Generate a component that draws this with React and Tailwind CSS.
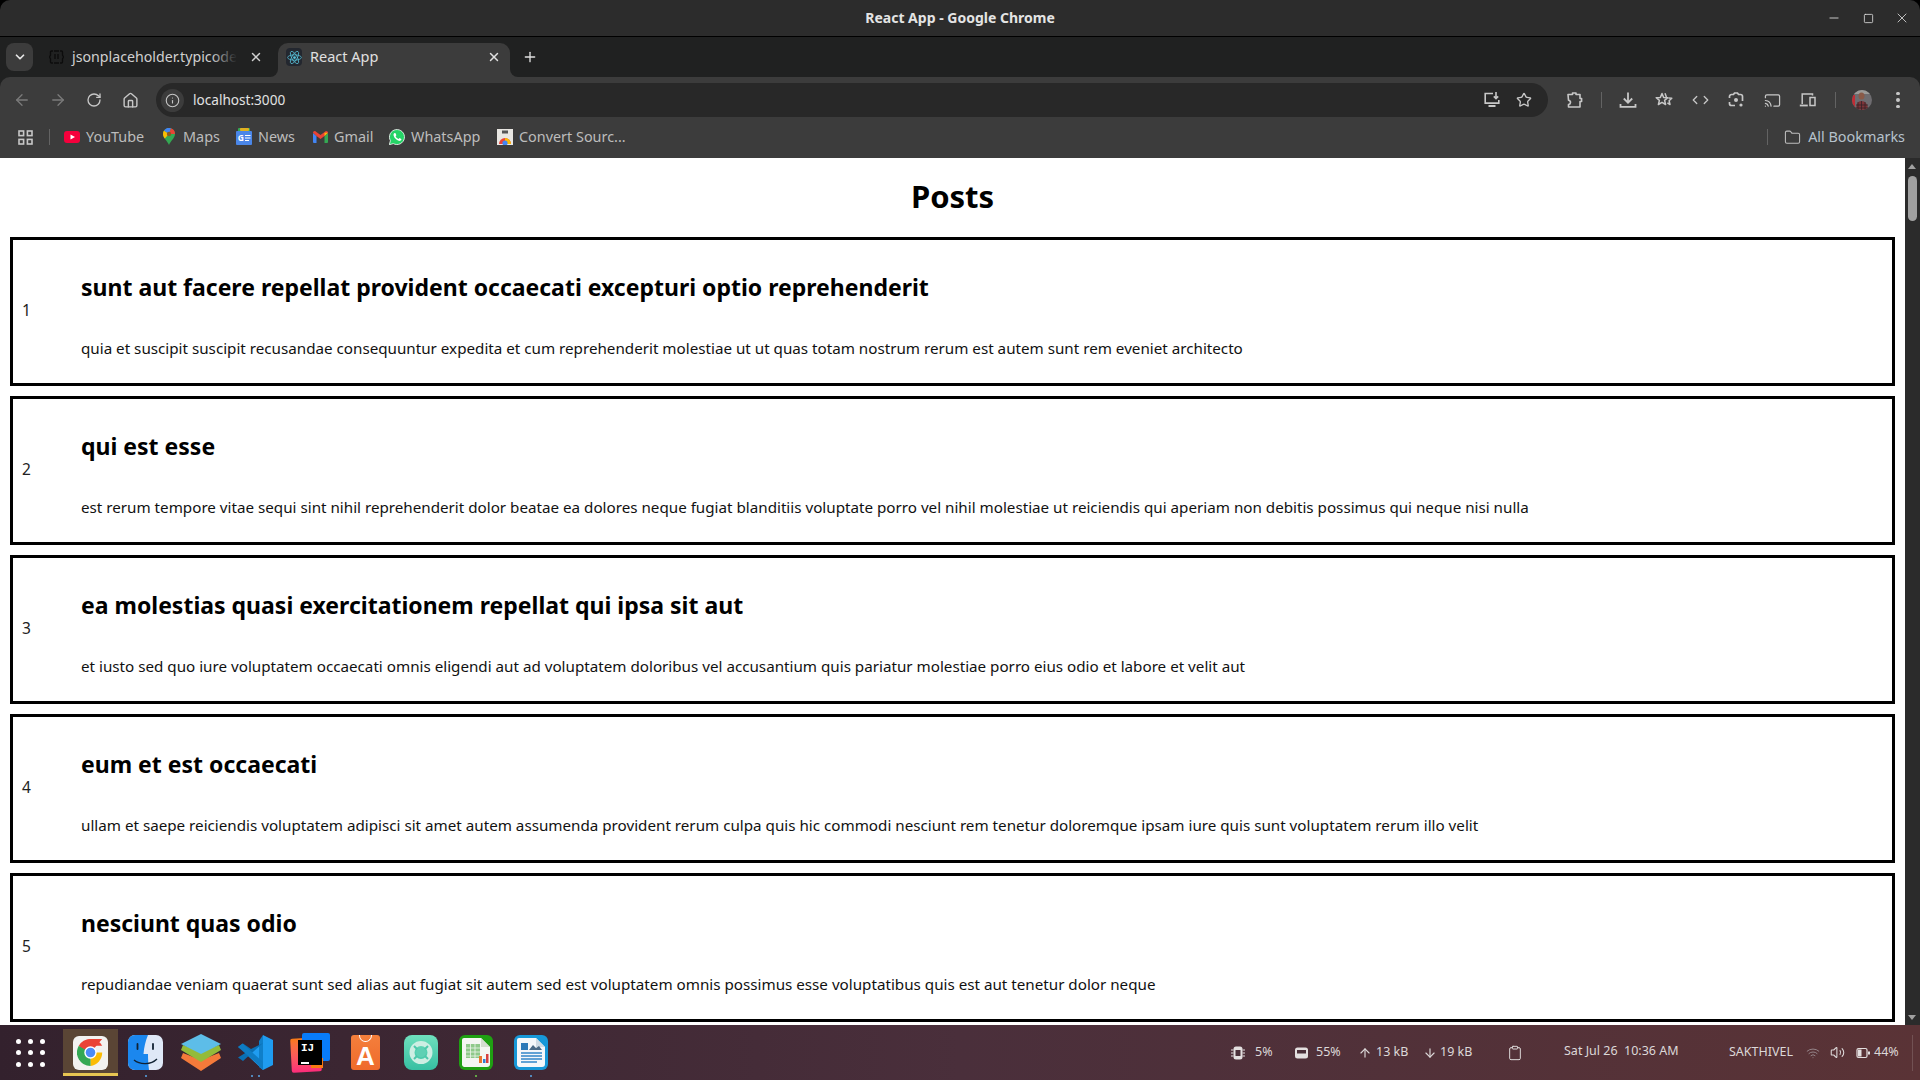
import { Info, ArrowLeft, ArrowRight, RotateCw, Home, Star, Cast, Folder, X, Plus, ChevronDown, ChevronLeft, ChevronRight, Minus, Square, Wifi, Volume2, ArrowUp, ArrowDown, Clipboard } from 'lucide-react'

const POSTS = [
  { id: 1, title: 'sunt aut facere repellat provident occaecati excepturi optio reprehenderit', body: 'quia et suscipit suscipit recusandae consequuntur expedita et cum reprehenderit molestiae ut ut quas totam nostrum rerum est autem sunt rem eveniet architecto' },
  { id: 2, title: 'qui est esse', body: 'est rerum tempore vitae sequi sint nihil reprehenderit dolor beatae ea dolores neque fugiat blanditiis voluptate porro vel nihil molestiae ut reiciendis qui aperiam non debitis possimus qui neque nisi nulla' },
  { id: 3, title: 'ea molestias quasi exercitationem repellat qui ipsa sit aut', body: 'et iusto sed quo iure voluptatem occaecati omnis eligendi aut ad voluptatem doloribus vel accusantium quis pariatur molestiae porro eius odio et labore et velit aut' },
  { id: 4, title: 'eum et est occaecati', body: 'ullam et saepe reiciendis voluptatem adipisci sit amet autem assumenda provident rerum culpa quis hic commodi nesciunt rem tenetur doloremque ipsam iure quis sunt voluptatem rerum illo velit' },
  { id: 5, title: 'nesciunt quas odio', body: 'repudiandae veniam quaerat sunt sed alias aut fugiat sit autem sed est voluptatem omnis possimus esse voluptatibus quis est aut tenetur dolor neque' },
]

function Post({ post }) {
  return (
    <div className="flex items-center h-[149px] mb-[10px] border-[3px] border-black pl-[9px] shrink-0">
      <div className="w-[59px] text-[15.5px] -mt-[1px] text-[#222]">{post.id}</div>
      <div className="pt-[6px]">
        <div className="text-[23px] leading-[32px] font-bold text-black">{post.title}</div>
        <div className="mt-[34px] text-[15.2px] leading-[22px] text-[#111]">{post.body}</div>
      </div>
    </div>
  )
}

// toolbar icon holder, 36px pitch
function Slot({ children }) {
  return <div className="w-[36px] h-full flex items-center justify-center shrink-0">{children}</div>
}

function Sep() {
  return <div className="w-px h-[16px] bg-[#636363] shrink-0" />
}

function Bookmark({ icon, label, gap, width }) {
  return (
    <div className={`flex items-center shrink-0 ${width}`}>
      <div className={`flex items-center justify-center shrink-0 ${gap}`}>{icon}</div>
      <span>{label}</span>
    </div>
  )
}

function InstallIcon() {
  return (
    <svg width="18" height="18" viewBox="0 0 18 18" fill="none" stroke="#c7c7c7" strokeWidth="1.6">
      <path d="M10 2.5H2.2v9.6h13.6V9" />
      <path d="M13 1v6.5M10.8 5.4 13 7.6l2.2-2.2" />
      <path d="M5.5 15h7" strokeWidth="2" />
    </svg>
  )
}

function PuzzleIcon() {
  return (
    <svg width="18" height="18" viewBox="0 0 18 18" fill="none" stroke="#c7c7c7" strokeWidth="1.6" strokeLinejoin="round">
      <path d="M2 3.5h4.5V2h3.5v1.5h4v4h1.6v3H14v5.500H2.500v-2.500c1.600-.2 2-1 2-2s-.6-2-2-2.200z" />
    </svg>
  )
}

function DownloadIcon() {
  return (
    <svg width="18" height="18" viewBox="0 0 18 18" fill="none" stroke="#c7c7c7" strokeWidth="1.8">
      <path d="M9 1.5v10M4.8 7.5 9 11.7l4.2-4.2" />
      <path d="M1.5 13v2.8h15V13" />
    </svg>
  )
}

function StarListIcon() {
  return (
    <svg width="18" height="18" viewBox="0 0 18 18" fill="none" stroke="#c7c7c7" strokeWidth="1.5" strokeLinejoin="round">
      <path d="M7 2.5 8.6 6.4l4.2.3-3.2 2.7 1 4.1L7 11.3l-3.6 2.2 1-4.1L1.2 6.7l4.2-.3z" />
      <path d="M10 2.2 11.4 6M13.4 7l3.4.3-2.7 2.4.9 3.8-2.6-1.6" />
    </svg>
  )
}

function LensIcon() {
  return (
    <svg width="18" height="18" viewBox="0 0 18 18" fill="none" stroke="#c7c7c7" strokeWidth="1.7">
      <path d="M2.500 7V5.500a2 2 0 0 1 2-2h2L7.500 2h3l1 1.500h2a2 2 0 0 1 2 2V10" />
      <path d="M2.500 11v1.500a2 2 0 0 0 2 2H8" />
      <circle cx="9" cy="9" r="2" fill="#c7c7c7" stroke="none" />
      <circle cx="14" cy="14" r="1.600" fill="#c7c7c7" stroke="none" />
    </svg>
  )
}

function DevicesIcon() {
  return (
    <svg width="18" height="18" viewBox="0 0 18 18" fill="none" stroke="#c7c7c7" strokeWidth="1.5">
      <path d="M3.2 13V3h10.3v1.5" />
      <path d="M.8 14.5h8" strokeWidth="1.8" />
      <rect x="11" y="6.5" width="5" height="8" />
    </svg>
  )
}

function Avatar() {
  return (
    <svg width="20" height="20" viewBox="0 0 20 20">
      <clipPath id="avatar-clip"><circle cx="10" cy="10" r="10" /></clipPath>
      <g clipPath="url(#avatar-clip)">
        <rect width="20" height="20" fill="#6e6c70" />
        <rect width="20" height="4" fill="#9b9a98" />
        <rect width="3" height="20" y="5" fill="#c22c34" />
        <ellipse cx="9.500" cy="6" rx="3" ry="3.500" fill="#8a5a48" />
        <path d="M4 20c0-6 2-9 5.500-9S16 14 16 20z" fill="#7d3438" />
        <path d="M6 12v8M9.500 11v9M13 12v8M4 15h12M4 18h12" stroke="#33242a" strokeWidth=".8" />
      </g>
    </svg>
  )
}

function GridIcon() {
  return (
    <svg width="15" height="15" viewBox="0 0 15 15" fill="none" stroke="#c7c7c7" strokeWidth="1.6">
      <rect x="1" y="1" width="4.6" height="4.6" />
      <rect x="9.4" y="1" width="4.6" height="4.6" />
      <rect x="1" y="9.4" width="4.6" height="4.6" />
      <rect x="9.4" y="9.4" width="4.6" height="4.6" />
    </svg>
  )
}

function YoutubeIcon() {
  return (
    <svg width="16" height="12" viewBox="0 0 16 12">
      <rect width="16" height="12" rx="3" fill="#f5003c" />
      <path d="M6.5 3.5 11 6l-4.5 2.5z" fill="#fff" />
    </svg>
  )
}

function MapsIcon() {
  return (
    <svg width="12" height="17" viewBox="0 0 12 17">
      <path d="M6 17C4.500 13 0 10 0 6a6 6 0 0 1 12 0c0 4-4.500 7-6 11z" fill="#34a853" />
      <path d="M1 2.600 6 6l-4.200 4.500C.6 9 0 7.500 0 6c0-1.300.4-2.500 1-3.400z" fill="#fbbc04" />
      <path d="M1 2.600A6 6 0 0 1 8 .3L6 6z" fill="#4285f4" />
      <path d="M8 .3A6 6 0 0 1 12 6H6z" fill="#ea4335" />
      <circle cx="6" cy="6" r="2.200" fill="#8a5a20" />
    </svg>
  )
}

function NewsIcon() {
  return (
    <svg width="16" height="17" viewBox="0 0 16 17">
      <rect x="2" y="0" width="12" height="4" rx="1" fill="#34a853" />
      <rect x="4" y="0" width="9" height="3" rx="1" fill="#e0b020" />
      <rect y="3" width="16" height="14" rx="1" fill="#4a86e8" />
      <text x="1.800" y="13" fontSize="8.500" fontWeight="700" fill="#fff" fontFamily="Noto Sans, sans-serif">G</text>
      <path d="M9 7.500h5.500M9 10h5.500M9 12.500h4" stroke="#fff" strokeWidth="1.100" />
    </svg>
  )
}

function GmailIcon() {
  return (
    <svg width="15" height="12" viewBox="0 0 15 12">
      <path d="M0 2v9a1 1 0 0 0 1 1h2.500V5z" fill="#4285f4" />
      <path d="M15 2v9a1 1 0 0 1-1 1h-2.500V5z" fill="#34a853" />
      <path d="M0 1.800C0 .4 1.600-.4 2.700.4L7.500 4 12.300.4C13.400-.4 15 .4 15 1.800L11.500 5 7.500 8 3.500 5z" fill="#ea4335" />
      <path d="M11.500 1.700 15 1.800 11.500 5z" fill="#fbbc04" />
    </svg>
  )
}

function WhatsappIcon() {
  return (
    <svg width="16" height="16" viewBox="0 0 16 16">
      <path d="M.3 15.700 1.400 11.700A7.500 7.500 0 1 1 4.300 14.600z" fill="#25d366" stroke="#fff" strokeWidth=".8" />
      <path d="M5.500 4c-.8.500-1.200 1.500-.8 2.800.6 2.200 2.800 4.400 5 5 1.300.3 2.300-.200 2.700-1l-.1-.8-1.800-.9-.9 1c-1.300-.5-2.400-1.500-3-2.800l.8-1-.8-2z" fill="#fff" />
    </svg>
  )
}

function ConvertIcon() {
  return (
    <svg width="16" height="16" viewBox="0 0 16 16">
      <rect width="16" height="16" fill="#e8e6e2" />
      <rect x="5" y="1.500" width="6" height="3" fill="#555" />
      <path d="M2 15a6 6 0 0 1 12 0z" fill="#ea4335" />
      <path d="M8 15V9a6 6 0 0 1 6 6z" fill="#fbbc04" />
      <circle cx="8" cy="14" r="2.600" fill="#4285f4" />
    </svg>
  )
}

function ReactFavicon() {
  return (
    <div className="w-[16px] h-[18px] rounded-sm bg-[#23272f] flex items-center justify-center shrink-0">
      <svg width="15" height="15" viewBox="-12 -12 24 24" fill="none" stroke="#58c4dc" strokeWidth="1.200">
        <circle r="2.200" fill="#58c4dc" stroke="none" />
        <ellipse rx="11" ry="4.300" />
        <ellipse rx="11" ry="4.300" transform="rotate(60)" />
        <ellipse rx="11" ry="4.300" transform="rotate(120)" />
      </svg>
    </div>
  )
}

function JsonFavicon() {
  return (
    <svg width="15" height="14" viewBox="0 0 15 14" fill="none" stroke="#0c0c0c" strokeWidth="1.300" className="shrink-0">
      <path d="M4 1H2.500a1 1 0 0 0-1 1v3l-1 2 1 2v3a1 1 0 0 0 1 1H4M11 1h1.500a1 1 0 0 1 1 1v3l1 2-1 2v3a1 1 0 0 1-1 1H11" />
      <path d="M6 4v5M9 4v5M5 1h5M5 13h5" />
    </svg>
  )
}

function ChromeLogo() {
  return (
    <svg width="27" height="27" viewBox="0 0 48 48">
      <path d="M24 24 13.600 42 3.200 24A24 24 0 0 1 24 0h20.800z" fill="#ea4335" />
      <path d="M24 24h20.800A24 24 0 0 1 24 48l-.100 0z" fill="#fbbc04" />
      <path d="M24 24 24 48A24 24 0 0 1 3.200 12z" fill="#34a853" />
      <path d="M24 0a24 24 0 0 1 20.800 12H24a12 12 0 0 0-10.400 6L3.200 12A24 24 0 0 1 24 0z" fill="#ea4335" />
      <circle cx="24" cy="24" r="11" fill="#fff" />
      <circle cx="24" cy="24" r="8.500" fill="#4c8bf5" />
    </svg>
  )
}

function FinderLogo() {
  return (
    <svg width="35" height="35" viewBox="0 0 35 35">
      <rect width="35" height="35" rx="7" fill="#dfe8f7" />
      <path d="M7 0h13c-2.500 6-4 12-4.500 19H20c0 5 .3 10 1 16H7a7 7 0 0 1-7-7V7a7 7 0 0 1 7-7z" fill="#1b87ee" />
      <path d="M6 25c6 5 17 5 23-1" fill="none" stroke="#123" strokeWidth="1.300" />
      <path d="M9.500 9v5M25 9v5" stroke="#123" strokeWidth="1.800" strokeLinecap="round" />
    </svg>
  )
}

function LayersLogo() {
  return (
    <svg width="40" height="38" viewBox="0 0 40 38">
      <path d="M20 26 38 19l2 5-20 13L0 24l2-5z" fill="#f47a3a" />
      <path d="M20 18 38 11l2 5-20 12L0 16l2-5z" fill="#93bb3a" />
      <path d="M20 0 40 10 20 20 0 10z" fill="#5dbde8" />
    </svg>
  )
}

function VscodeLogo() {
  return (
    <svg width="35" height="35" viewBox="0 0 35 35">
      <path d="M25 0 35 5v25L25 35 9 20l16-12z" fill="#1f9cf0" />
      <path d="M25 0v35l-4-3V6z" fill="#0f7fc9" />
      <path d="M25 8 5 26 0 22.500 8 17.500 0 12 5 8.500 13 14z" fill="#0a70b5" />
      <path d="M4.500 8.500 25 27v7L0 12z" fill="#0e7cc4" />
    </svg>
  )
}

function IntellijLogo() {
  return (
    <div className="relative w-[39px] h-[39px]">
      <div className="absolute left-0 top-[5px] w-[30px] h-[34px] rounded-[2px] bg-gradient-to-b from-[#f97a12] to-[#fc2b7a] -rotate-3" />
      <div className="absolute right-0 top-0 w-[28px] h-[28px] rounded-[2px] bg-[#087cfa]" />
      <div className="absolute right-[7px] bottom-[4px] w-[12px] h-[10px] bg-[#f97a12]" />
      <div className="absolute left-[7px] top-[7px] w-[24px] h-[25px] bg-black text-white font-['Liberation_Mono',monospace] font-bold text-[11px] leading-none pl-[3px] pt-[3px]">
        IJ
        <div className="w-[8px] h-[1.5px] mt-[8px] bg-white" />
      </div>
    </div>
  )
}

function StoreLogo() {
  return (
    <div className="relative w-[29px] h-[35px] rounded-[3px] bg-gradient-to-b from-[#f47f3c] to-[#ef6a2b] flex items-end justify-center">
      <div className="absolute left-[8px] top-0 w-[13px] h-[7px] border-b-[1.5px] border-x-[1.5px] border-white rounded-b-full" />
      <span className="font-['Liberation_Sans',sans-serif] font-bold text-white text-[26px] leading-[27px]">A</span>
    </div>
  )
}

function BuoyLogo() {
  return (
    <svg width="34" height="35" viewBox="0 0 34 35">
      <defs>
        <linearGradient id="buoy" x1="0" y1="0" x2="0" y2="1">
          <stop offset="0" stopColor="#6fe0bd" />
          <stop offset="1" stopColor="#36bfa2" />
        </linearGradient>
      </defs>
      <rect width="34" height="35" rx="8" fill="url(#buoy)" />
      <circle cx="17" cy="17.500" r="9" fill="none" stroke="#cdeee3" strokeWidth="5" />
      <path d="M10 11l4 4M24 11l-4 4M10 24l4-4M24 24l-4-4" stroke="#4cc7ab" strokeWidth="2" />
      <circle cx="17" cy="17.500" r="5" fill="#5ed0b4" />
    </svg>
  )
}

function SheetLogo() {
  return (
    <svg width="34" height="35" viewBox="0 0 34 35">
      <rect width="34" height="35" rx="6" fill="#1fa012" />
      <path d="M5 3h17l9 9v17a3 3 0 0 1-3 3H5a3 3 0 0 1-2-2V5a2 2 0 0 1 2-2z" fill="#f4f6f2" />
      <path d="M22 3l9 9h-9z" fill="#d5ddd0" />
      <rect x="7" y="9" width="14" height="14" fill="#8fc98a" />
      <path d="M7 13h14M7 17h14M7 21h14M11.500 9v14M16 9v14" stroke="#eef6ec" strokeWidth=".8" />
      <rect x="20" y="21" width="3" height="7" fill="#e8772e" />
      <rect x="24" y="24" width="2.500" height="4" fill="#2f7fd6" />
      <rect x="27" y="19" width="2.500" height="9" fill="#d63f3f" />
    </svg>
  )
}

function WriterLogo() {
  return (
    <svg width="34" height="35" viewBox="0 0 34 35">
      <rect width="34" height="35" rx="6" fill="#1798d8" />
      <path d="M5 3h17l9 9v17a3 3 0 0 1-3 3H5a3 3 0 0 1-2-2V5a2 2 0 0 1 2-2z" fill="#f4f7fa" />
      <path d="M22 3l9 9h-9z" fill="#cfdbe4" />
      <rect x="7" y="8" width="7" height="7" fill="#2b79b8" />
      <path d="M15 15l4-5 3 3 3-2 3 4z" fill="#4a6a86" />
      <path d="M7 18h21M7 21h21M7 24h21M7 27h16" stroke="#3186c9" strokeWidth="1.600" />
    </svg>
  )
}

// dock item, the running-app dots sit under the icon
function DockApp({ children, dots = [], active }) {
  return (
    <div className={`relative w-[55px] h-[47px] flex items-center justify-center shrink-0 ${active ? 'bg-[#5a4535]' : ''}`}>
      {children}
      {active && <div className="absolute left-0 right-0 bottom-0 h-[3px] bg-[#e7c552]" />}
      {dots.length > 0 && (
        <div className="absolute left-0 right-0 -bottom-[1px] flex justify-center gap-[5px]">
          {dots.map((c, i) => <span key={i} className={`w-[2px] h-[2px] rounded-full ${c}`} />)}
        </div>
      )}
    </div>
  )
}

function CpuIcon() {
  return (
    <svg width="14" height="16" viewBox="0 0 14 16" fill="none" stroke="#e4e0e0">
      <rect x="2.500" y="1.500" width="9" height="13" rx="2.500" fill="#e4e0e0" stroke="none" />
      <rect x="4.500" y="5" width="5" height="6" fill="#4a3039" stroke="none" />
      <path d="M0 5h2.500M0 8h2.500M0 11h2.500M11.500 5H14M11.500 8H14M11.500 11H14" />
    </svg>
  )
}

function MemIcon() {
  return (
    <svg width="15" height="14" viewBox="0 0 15 14">
      <rect x="1" y="1.500" width="13" height="11" rx="2.500" fill="#e4e0e0" />
      <rect x="3" y="4" width="9" height="3.500" fill="#4a3039" />
    </svg>
  )
}

function BatteryIcon() {
  return (
    <svg width="14" height="12" viewBox="0 0 14 12" fill="none" stroke="#e4e0e0" strokeWidth="1.200">
      <rect x="1" y="1.500" width="10" height="9" rx="1.500" />
      <rect x="2" y="2.500" width="3.500" height="7" fill="#e4e0e0" stroke="none" />
      <rect x="12" y="4.500" width="2" height="3" fill="#e4e0e0" stroke="none" />
    </svg>
  )
}

export default function App() {
  return (
    <div className="w-[1920px] h-[1080px] overflow-hidden flex flex-col font-['Noto_Sans',sans-serif] bg-black">
      <div className="h-[37px] shrink-0 rounded-t-[10px] bg-[#2c2c2c] border-b border-black flex items-center justify-center relative text-[14px] font-bold text-[#e4e4e4] pb-[1px]">
        React App - Google Chrome
        <div className="absolute right-0 top-0 h-full flex items-center pr-[1px] text-[#ddd]">
          <div className="w-[34px] flex justify-center"><Minus size={14} strokeWidth={1.5} /></div>
          <div className="w-[34px] flex justify-center"><Square size={11} strokeWidth={1.8} /></div>
          <div className="w-[34px] flex justify-center"><X size={16} strokeWidth={1.25} /></div>
        </div>
      </div>

      <div className="h-[40px] shrink-0 bg-[#202121] flex items-end text-[14.5px] text-[#d0d0d0]">
        <div className="w-[27px] h-[28px] ml-[6px] mb-[6px] rounded-lg bg-[#3c3c3c] flex items-center justify-center shrink-0">
          <ChevronDown size={14} strokeWidth={3} className="text-[#e6e6e6]" />
        </div>
        <div className="w-[245px] h-[34px] flex items-center pl-[16px] pb-[6px] relative shrink-0">
          <JsonFavicon />
          <span className="ml-[8px] relative whitespace-nowrap text-[14.2px]">
            jsonplaceholder.typicode
            <span className="absolute right-0 top-0 h-full w-[26px] bg-gradient-to-r from-transparent to-[#202121]" />
          </span>
          <X size={14} strokeWidth={2.5} className="absolute left-[216px]" />
        </div>
        <div className="relative w-[232px] h-[34px] bg-[#3c3c3c] rounded-t-[10px] flex items-center pl-[8px] pb-[6px] shrink-0 text-[#e0e0e0]">
          <div className="absolute -left-[8px] bottom-0 w-[8px] h-[8px] bg-[#3c3c3c]"><div className="w-full h-full bg-[#202121] rounded-br-[8px]" /></div>
          <div className="absolute -right-[8px] bottom-0 w-[8px] h-[8px] bg-[#3c3c3c]"><div className="w-full h-full bg-[#202121] rounded-bl-[8px]" /></div>
          <ReactFavicon />
          <span className="ml-[8px]">React App</span>
          <X size={14} strokeWidth={2.5} className="absolute left-[209px]" />
        </div>
        <Plus size={16} strokeWidth={2} className="ml-[12px] mb-[12px] shrink-0 text-[#e0e0e0]" />
      </div>

      <div className="h-[44px] shrink-0 bg-[#202121]">
        <div className="h-full bg-[#3c3c3c] rounded-t-[10px] flex items-center text-[#c7c7c7] pl-[4px] pt-[2px]">
          <Slot><ArrowLeft size={18} strokeWidth={1.75} className="text-[#7b7b7b]" /></Slot>
          <Slot><ArrowRight size={18} strokeWidth={1.75} className="text-[#7b7b7b]" /></Slot>
          <Slot><RotateCw size={16} strokeWidth={2} /></Slot>
          <Slot><Home size={17} strokeWidth={2} /></Slot>
          <div className="ml-[8px] w-[1392px] h-[34px] rounded-full bg-[#282828] flex items-center pl-[5px] pr-[8px] shrink-0">
            <div className="w-[23px] h-[23px] rounded-full bg-[#3c3c3c] flex items-center justify-center">
              <Info size={15} strokeWidth={1.75} />
            </div>
            <span className="ml-[9px] text-[13.6px] text-[#e2e2e2]">localhost:3000</span>
            <div className="ml-auto w-[32px] flex justify-center"><InstallIcon /></div>
            <div className="w-[32px] flex justify-center"><Star size={16} strokeWidth={2} /></div>
          </div>
          <div className="ml-[9px] h-full"><Slot><PuzzleIcon /></Slot></div>
          <div className="ml-[8px] mr-[8px]"><Sep /></div>
          <Slot><DownloadIcon /></Slot>
          <Slot><StarListIcon /></Slot>
          <Slot>
            <div className="flex items-center gap-[1px]">
              <ChevronLeft size={14} strokeWidth={2.25} className="-mr-[2px]" />
              <ChevronRight size={14} strokeWidth={2.25} className="-ml-[2px]" />
            </div>
          </Slot>
          <Slot><LensIcon /></Slot>
          <Slot><Cast size={17} strokeWidth={1.75} /></Slot>
          <Slot><DevicesIcon /></Slot>
          <div className="ml-[9px] mr-[8px]"><Sep /></div>
          <Slot><Avatar /></Slot>
          <Slot>
            <div className="flex flex-col gap-[3px]">
              <span className="w-[3.5px] h-[3.5px] rounded-full bg-[#c7c7c7]" />
              <span className="w-[3.5px] h-[3.5px] rounded-full bg-[#c7c7c7]" />
              <span className="w-[3.5px] h-[3.5px] rounded-full bg-[#c7c7c7]" />
            </div>
          </Slot>
        </div>
      </div>

      <div className="h-[37px] shrink-0 bg-[#3c3c3c] flex items-center text-[14.4px] text-[#bdbdbd] pb-[5px] whitespace-nowrap">
        <div className="ml-[18px] w-[31px] shrink-0"><GridIcon /></div>
        <Sep />
        <div className="ml-[14px] flex">
          <Bookmark icon={<YoutubeIcon />} label="YouTube" gap="w-[22px] justify-start" width="w-[99px]" />
          <Bookmark icon={<MapsIcon />} label="Maps" gap="w-[20px] justify-start" width="w-[73px]" />
          <Bookmark icon={<NewsIcon />} label="News" gap="w-[22px] justify-start" width="w-[77px]" />
          <Bookmark icon={<GmailIcon />} label="Gmail" gap="w-[21px] justify-start" width="w-[76px]" />
          <Bookmark icon={<WhatsappIcon />} label="WhatsApp" gap="w-[22px] justify-start" width="w-[108px]" />
          <Bookmark icon={<ConvertIcon />} label="Convert Sourc..." gap="w-[22px] justify-start" width="w-[140px]" />
        </div>
        <div className="ml-auto"><Sep /></div>
        <Folder size={17} strokeWidth={1.5} className="ml-[16px] shrink-0" />
        <span className="ml-[7px] mr-[15px] text-[#b6c2cc]">All Bookmarks</span>
      </div>

      <div className="h-[867px] shrink-0 flex overflow-hidden bg-white">
        <div className="w-[1905px] pl-[10px] pr-[10px] flex flex-col shrink-0">
          <div className="h-[79px] shrink-0 flex items-center justify-center text-[31px] font-bold text-black pb-[2px]">Posts</div>
          {POSTS.map(p => <Post key={p.id} post={p} />)}
        </div>
        <div className="w-[15px] bg-[#2b2b2b] relative shrink-0">
          <div className="absolute left-[3px] top-[6px] w-0 h-0 border-x-[4.5px] border-x-transparent border-b-[5px] border-b-[#a0a0a0]" />
          <div className="absolute left-[3px] top-[18px] w-[9px] h-[45px] rounded-full bg-[#a0a0a0]" />
          <div className="absolute left-[3px] bottom-[5px] w-0 h-0 border-x-[4.5px] border-x-transparent border-t-[5px] border-t-[#a0a0a0]" />
        </div>
      </div>

      <div className="flex-1 bg-gradient-to-r from-[#33212d] via-[#4a2f3b] to-[#5a3336] flex items-center text-[12.5px] text-[#dcd8d8] whitespace-nowrap">
        <div className="ml-[14px] w-[34px] grid grid-cols-3 gap-y-[6.500px] gap-x-[6.500px] shrink-0 px-[2px]">
          {Array.from({ length: 9 }).map((_, i) => <span key={i} className="w-[5px] h-[5px] rounded-full bg-white" />)}
        </div>
        <div className="ml-[15px] flex shrink-0">
          <DockApp active>
            <div className="w-[35px] h-[34px] rounded-[6px] bg-[#f2f2f0] flex items-center justify-center"><ChromeLogo /></div>
          </DockApp>
          <DockApp dots={['bg-[#5aa7e8]']}><FinderLogo /></DockApp>
          <DockApp><LayersLogo /></DockApp>
          <DockApp dots={['bg-[#5aa7e8]', 'bg-[#5aa7e8]']}><VscodeLogo /></DockApp>
          <DockApp><IntellijLogo /></DockApp>
          <DockApp><StoreLogo /></DockApp>
          <DockApp><BuoyLogo /></DockApp>
          <DockApp dots={['bg-[#6fd04a]']}><SheetLogo /></DockApp>
          <DockApp dots={['bg-[#5aa7e8]']}><WriterLogo /></DockApp>
        </div>
        <div className="ml-[672px] w-[16px] flex justify-center shrink-0"><CpuIcon /></div>
        <span className="ml-[9px] w-[30px]">5%</span>
        <div className="ml-[8px] w-[16px] flex justify-center shrink-0"><MemIcon /></div>
        <span className="ml-[7px] w-[35px]">55%</span>
        <ArrowUp size={14} strokeWidth={2} className="ml-[7px] shrink-0" />
        <span className="ml-[4px] w-[40px]">13 kB</span>
        <ArrowDown size={14} strokeWidth={2} className="ml-[7px] shrink-0" />
        <span className="ml-[3px] w-[40px]">19 kB</span>
        <Clipboard size={16} strokeWidth={1.5} className="ml-[27px] shrink-0" />
        <span className="ml-[41px] w-[130px] whitespace-pre -mt-[2px]">Sat Jul 26  10:36 AM</span>
        <span className="ml-[35px] w-[72px]">SAKTHIVEL</span>
        <Wifi size={14} strokeWidth={1.5} className="ml-[5px] mr-[1px] shrink-0 text-[#9d8f93]" />
        <Volume2 size={15} strokeWidth={1.75} className="ml-[9px] mr-[1px] shrink-0" />
        <div className="ml-[9px] w-[16px] flex justify-center shrink-0"><BatteryIcon /></div>
        <span className="ml-[3px]">44%</span>
        <div className="ml-auto mr-[7px] w-px h-[36px] bg-white/15 shrink-0" />
      </div>
    </div>
  )
}
